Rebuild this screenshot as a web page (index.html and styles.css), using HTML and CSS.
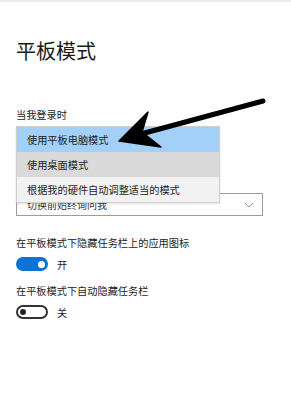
FILE: index.html
```html
<!DOCTYPE html>
<html lang="zh-CN">
<head>
<meta charset="utf-8">
<link rel="stylesheet" href="styles.css">
</head>
<body>
<div class="topline"></div>
<main class="page">
  <h1 class="title">平板模式</h1>
  <section class="select-area">
    <div class="label">当我登录时</div>
    <div class="combo">
      <span class="combo-text">切换前始终询问我</span>
      <svg class="chevron" width="10" height="6" viewBox="0 0 10 6"><path d="M1 1 L5 5 L9 1" fill="none" stroke="#9a9a9a" stroke-width="1"/></svg>
    </div>
    <ul class="popup">
      <li class="item selected">使用平板电脑模式</li>
      <li class="item hover">使用桌面模式</li>
      <li class="item">根据我的硬件自动调整适当的模式</li>
    </ul>
  </section>
  <section class="setting first">
    <div class="label">在平板模式下隐藏任务栏上的应用图标</div>
    <div class="toggle-row">
      <span class="toggle on"><span class="knob"></span></span>
      <span class="state">开</span>
    </div>
  </section>
  <section class="setting">
    <div class="label">在平板模式下自动隐藏任务栏</div>
    <div class="toggle-row">
      <span class="toggle off"><span class="knob"></span></span>
      <span class="state">关</span>
    </div>
  </section>
</main>
<svg class="arrow" width="291" height="400" viewBox="0 0 291 400">
  <path d="M141 134 L263 101" stroke="#000" stroke-width="5" stroke-linecap="round" fill="none"/>
  <polygon points="119,141 148,112 142,132 161,147" fill="#000" stroke="#000" stroke-width="1.5" stroke-linejoin="round"/>
</svg>
</body>
</html>
```

FILE: styles.css
```css
html, body {
  margin: 0;
  padding: 0;
  background: #fff;
}
body {
  font-family: "Noto Sans CJK SC", "Noto Sans", sans-serif;
  color: #222;
  width: 291px;
  height: 400px;
  overflow: hidden;
  position: relative;
}
.topline {
  height: 2px;
  background: #ececec;
}
.page {
  padding: 0 28px 0 16px;
}
.title {
  margin: 36px 0 0 0;
  font-size: 20px;
  line-height: 26px;
  font-weight: 400;
  color: #1a1a1a;
}
.select-area {
  position: relative;
  margin-top: 44px;
}
.label {
  font-size: 10.2px;
  line-height: 14px;
  height: 14px;
  color: #222;
  white-space: nowrap;
}
.combo {
  margin-top: 71px;
  box-sizing: border-box;
  width: 247px;
  max-width: 247px;
  height: 23px;
  border: 1px solid #9c9c9c;
  display: flex;
  align-items: center;
  justify-content: space-between;
  padding: 0 8px 0 10px;
}
.combo-text {
  font-size: 10px;
  color: #333;
}
.chevron {
  display: block;
  flex: none;
}
.popup {
  position: absolute;
  top: 18px;
  left: 0;
  width: 202px;
  margin: 0;
  padding: 0;
  list-style: none;
  border: 1px solid #cfcfcf;
  background: #f2f2f2;
  box-shadow: 0 1px 2px rgba(0,0,0,0.12);
}
.item {
  height: 25px;
  line-height: 25px;
  padding-left: 10px;
  font-size: 10.2px;
  color: #1e1e1e;
  white-space: nowrap;
}
.item.selected {
  background: #a3d0f8;
}
.item.hover {
  background: #dadada;
}
.setting.first {
  margin-top: 20px;
}
.setting {
  margin-top: 13px;
}
.toggle-row {
  display: flex;
  align-items: center;
  gap: 9px;
  margin-top: 7px;
  height: 14px;
}
.toggle {
  width: 32px;
  height: 14px;
  border-radius: 7px;
  box-sizing: border-box;
  display: flex;
  align-items: center;
  padding: 0 3px;
}
.toggle.on {
  background: #0a73d5;
  justify-content: flex-end;
}
.toggle.on .knob {
  width: 7px;
  height: 7px;
  border-radius: 50%;
  background: #fff;
}
.toggle.off {
  border: 2px solid #333;
  background: #fff;
  justify-content: flex-start;
  padding: 0 2px;
}
.toggle.off .knob {
  width: 6px;
  height: 6px;
  border-radius: 50%;
  background: #222;
}
.state {
  font-size: 10.2px;
  color: #222;
}
.arrow {
  position: absolute;
  left: 0;
  top: 0;
  pointer-events: none;
}
```
